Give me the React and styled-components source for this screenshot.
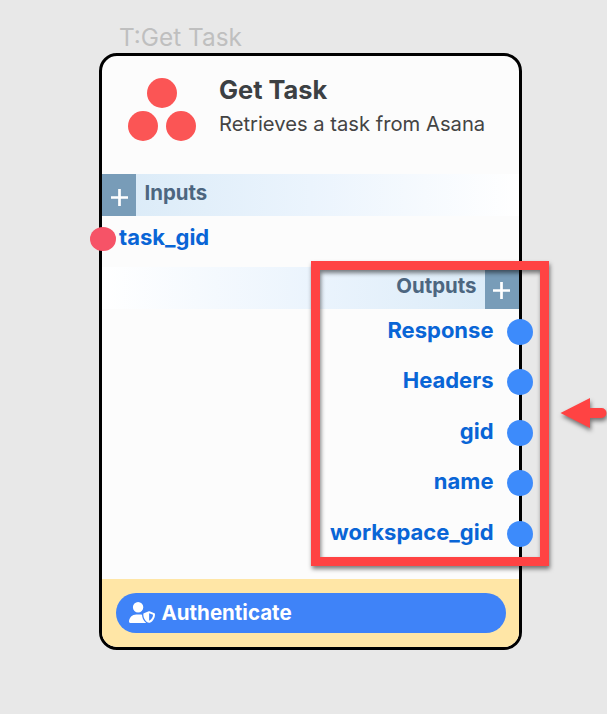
import React from "react";
import styled, { createGlobalStyle } from "styled-components";
import { FaUserShield } from "react-icons/fa6";

const GlobalStyle = createGlobalStyle`
  *, *::before, *::after { box-sizing: border-box; }
  body {
    margin: 0;
    background: #e8e8e8;
    font-family: Inter, "Liberation Sans", sans-serif;
  }
`;

const Canvas = styled.main`
  position: relative;
  width: 607px;
  height: 714px;
  overflow: hidden;
  padding: 22px 0 0 99px;
  background: #e8e8e8;
`;

const NodeLabel = styled.div`
  height: 31px;
  padding-left: 20px;
  font-size: 24.4px;
  line-height: 31px;
  color: #bfbfbf;
`;

const Card = styled.section`
  display: flex;
  flex-direction: column;
  width: 423px;
  height: 597px;
  border: 3px solid #000;
  border-radius: 18px;
  background: #fcfcfc;
`;

const Header = styled.header`
  display: flex;
  flex: none;
  height: 118px;
  padding: 18px 0 0 26px;
`;

const Logo = styled.svg`
  width: 68px;
  height: 68px;
  margin-top: 2px;
  fill: #fb5555;
`;

const Heading = styled.div`
  margin-left: 23px;
`;

const Title = styled.h1`
  margin: 0;
  font-size: 25.4px;
  line-height: 32px;
  font-weight: 700;
  color: #3c4043;
`;

const Description = styled.p`
  margin: 3px 0 0;
  font-size: 20.2px;
  line-height: 30px;
  color: #444;
  white-space: nowrap;
`;

const SectionBar = styled.div`
  display: flex;
  flex-direction: ${(p) => (p.$side === "right" ? "row-reverse" : "row")};
  flex: none;
  height: 42px;
  background: linear-gradient(
    to ${(p) => (p.$side === "right" ? "left" : "right")},
    #d9eaf7,
    #ebf4fd 50%,
    #fff
  );
`;

const AddButton = styled.button`
  display: grid;
  place-items: center;
  width: 34px;
  height: 42px;
  padding: 5px ${(p) => (p.$side === "right" ? "1px 0 0" : "0 0 1px")};
  border: 0;
  background: #789cb8;

  svg {
    width: 17px;
    height: 17px;
    stroke: #fff;
    stroke-width: 2.7;
  }
`;

const SectionTitle = styled.h2`
  margin: 0 8.5px;
  font-size: 20.4px;
  line-height: 38px;
  font-weight: 700;
  color: #4d6680;
`;

const PortList = styled.div`
  display: flex;
  flex: none;
  flex-direction: column;
  height: ${(p) => p.$height}px;
`;

const PortRow = styled.div`
  position: relative;
  display: flex;
  justify-content: ${(p) => (p.$side === "right" ? "flex-end" : "flex-start")};
  flex: none;
  height: 50.45px;
  padding: ${(p) => (p.$side === "right" ? "0 25.5px 0 0" : "0 0 0 17px")};
  font-size: 22px;
  line-height: 42px;
  font-weight: 700;
  color: #0965d6;
`;

const Port = styled.span`
  position: absolute;
  top: ${(p) => (p.$side === "right" ? 10 : 10.7)}px;
  ${(p) => p.$side}: ${(p) => (p.$side === "right" ? -13.7 : -12.2)}px;
  width: 26px;
  height: ${(p) => (p.$side === "right" ? 26 : 24.5)}px;
  border-radius: 50%;
  background: ${(p) => (p.$side === "right" ? "#3d8bfb" : "#f65367")};
`;

const Footer = styled.footer`
  flex: 1;
  padding: 14px 13.5px;
  border-radius: 0 0 15px 15px;
  background: #ffe6a6;
`;

const AuthButton = styled.button`
  display: flex;
  align-items: center;
  gap: 7px;
  width: 100%;
  height: 40px;
  padding: 0 13px;
  border: 0;
  border-radius: 20px;
  background: #3f83f8;
  color: #fff;
  font: 700 20.5px/40px Inter, sans-serif;

  svg {
    width: 26px;
    height: 21px;
    margin-bottom: 2px;
  }
`;

const Highlight = styled.div`
  position: absolute;
  left: 311px;
  top: 261px;
  width: 238px;
  height: 305px;
  border: 9px solid #ff4343;
  filter: drop-shadow(1px 3px 2px rgba(0, 0, 0, 0.5));
`;

const Arrow = styled.svg`
  position: absolute;
  left: 555px;
  top: 390px;
  width: 52px;
  height: 50px;
  overflow: visible;
  fill: #ff4343;
  filter: drop-shadow(1px 3px 2px rgba(0, 0, 0, 0.5));
`;

const outputs = ["Response", "Headers", "gid", "name", "workspace_gid"];

function Section({ title, side }) {
  return (
    <SectionBar $side={side}>
      <AddButton $side={side} aria-label={`Add ${title}`}>
        <svg viewBox="0 0 17 17">
          <path d="M0 8.5H17M8.5 0V17" />
        </svg>
      </AddButton>
      <SectionTitle>{title}</SectionTitle>
    </SectionBar>
  );
}

export default function App() {
  return (
    <Canvas>
      <GlobalStyle />
      <NodeLabel>T:Get Task</NodeLabel>
      <Card>
        <Header>
          <Logo viewBox="0 0 68 68">
            <circle cx="34" cy="17" r="15" />
            <circle cx="15" cy="50" r="15" />
            <circle cx="53" cy="50" r="15" />
          </Logo>
          <Heading>
            <Title>Get Task</Title>
            <Description>Retrieves a task from Asana</Description>
          </Heading>
        </Header>
        <Section title="Inputs" side="left" />
        <PortList $height={51}>
          <PortRow $side="left">
            <Port $side="left" />
            task_gid
          </PortRow>
        </PortList>
        <Section title="Outputs" side="right" />
        <PortList $height={270}>
          {outputs.map((name) => (
            <PortRow key={name} $side="right">
              {name}
              <Port $side="right" />
            </PortRow>
          ))}
        </PortList>
        <Footer>
          <AuthButton>
            <FaUserShield />
            Authenticate
          </AuthButton>
        </Footer>
      </Card>
      <Highlight />
      <Arrow viewBox="0 0 52 50">
        <path d="M5.5 23L35 8V18H46.5A5 5 0 0 1 46.5 28H35V38Z" />
      </Arrow>
    </Canvas>
  );
}
